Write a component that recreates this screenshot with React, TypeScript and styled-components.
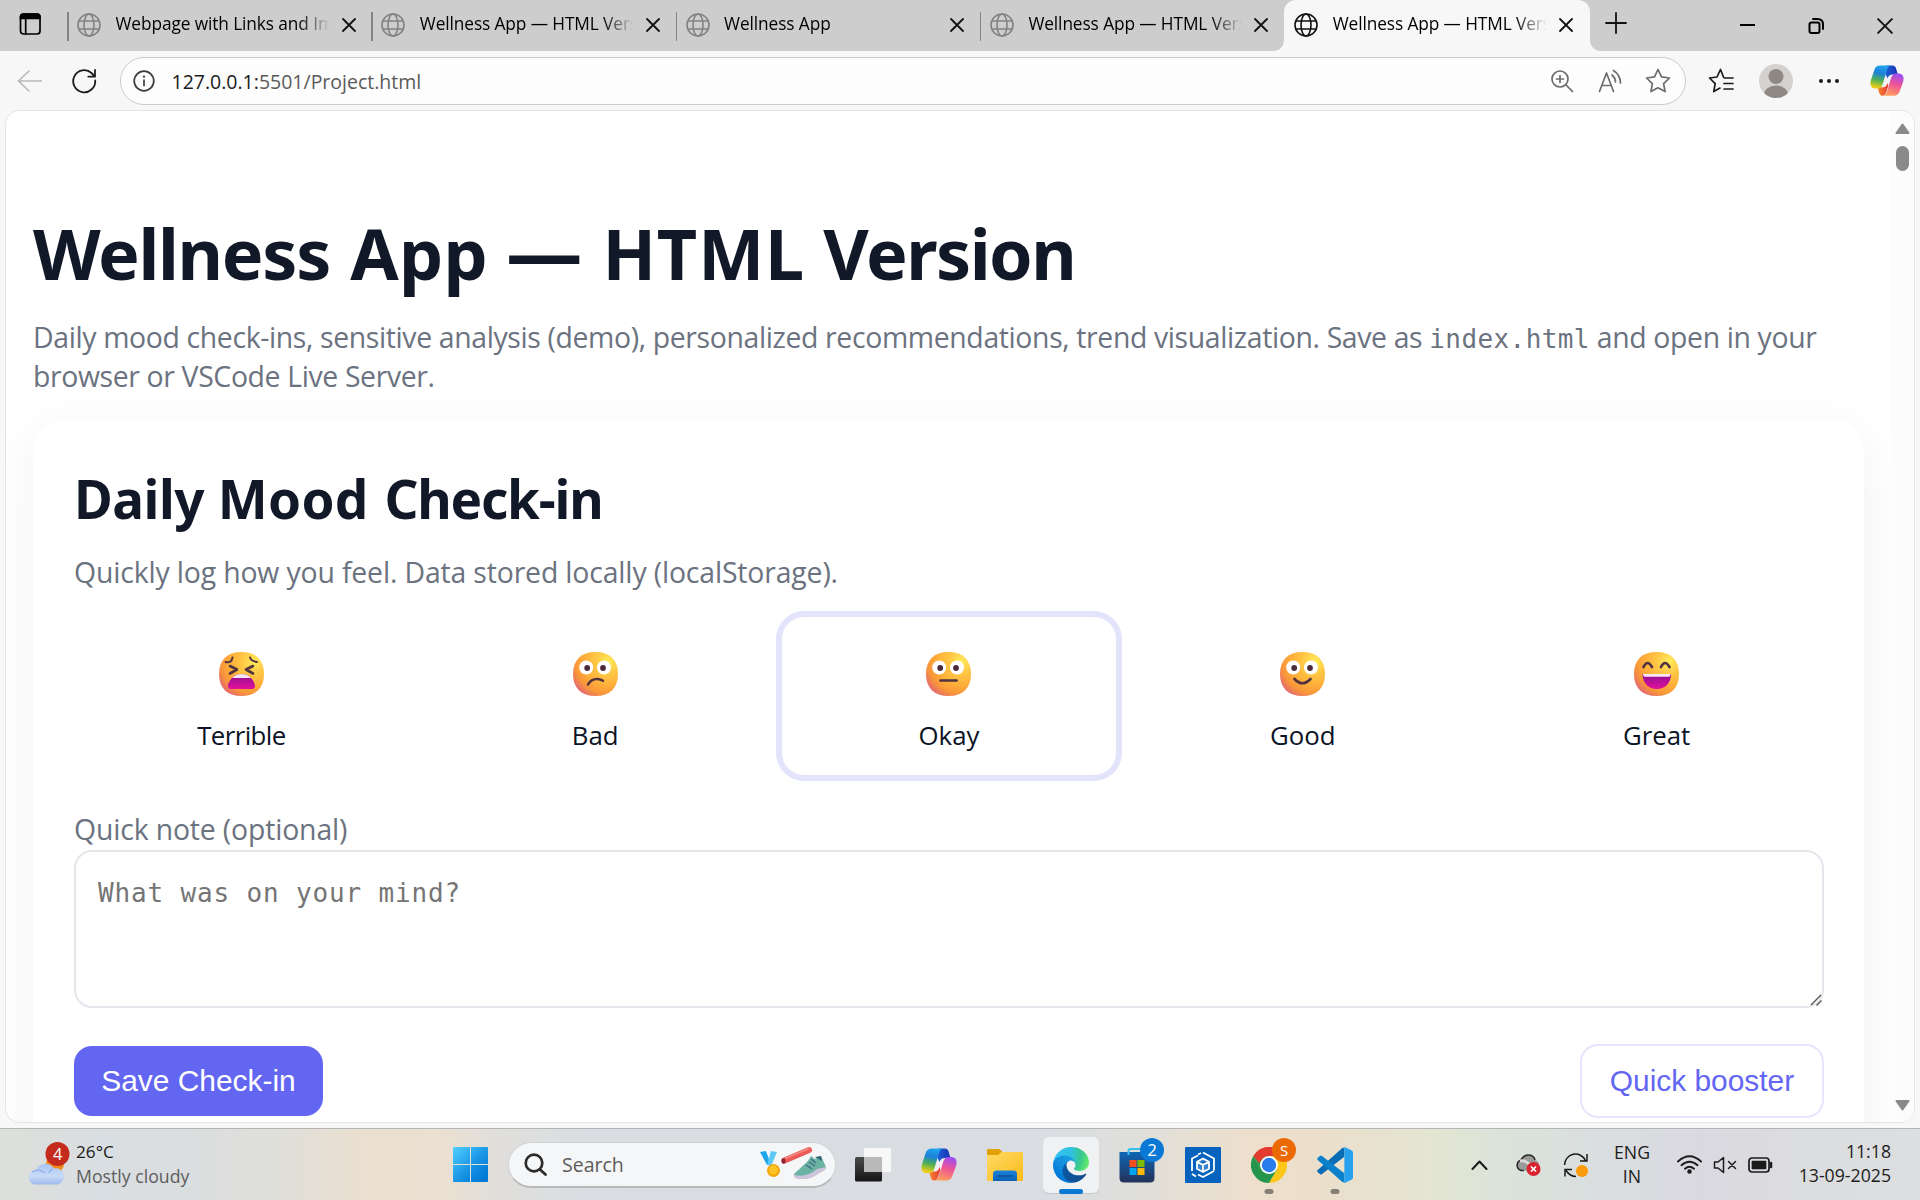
import React from 'react';
import styled, { createGlobalStyle } from 'styled-components';

const UI = '"Open Sans", "Noto Sans", sans-serif';

const GlobalStyle = createGlobalStyle`
  * { box-sizing: border-box; }
  html, body { margin: 0; padding: 0; overflow: hidden; }
  body { font-family: ${UI}; }
  svg { display: block; flex: none; }
`;

const Screen = styled.div`
  width: 1920px;
  height: 1200px;
  display: flex;
  flex-direction: column;
  background: #f7f7f7;
  overflow: hidden;
`;

/* ---------- tab strip ---------- */

const TabStrip = styled.div`
  height: 51px;
  flex: none;
  display: flex;
  background: #cdcdcd;
`;

const WorkspaceButton = styled.div`
  width: 67px;
  padding: 13px 0 0 19px;
`;

const Tab = styled.div<{ $active?: boolean }>`
  position: relative;
  width: ${p => (p.$active ? 306 : 304.3)}px;
  height: 51px;
  display: flex;
  align-items: flex-start;
  padding: 13px 0 0 10px;
  color: #000;
  background: ${p => (p.$active ? '#f7f7f7' : 'transparent')};
  border-radius: 12px 12px 0 0;

  &::before {
    content: '';
    position: absolute;
    left: ${p => (p.$active ? -10 : 0)}px;
    top: ${p => (p.$active ? 41 : 12)}px;
    width: ${p => (p.$active ? 10 : 1.5)}px;
    height: ${p => (p.$active ? 10 : 29)}px;
    background: ${p => (p.$active ? 'radial-gradient(circle at 0 0, transparent 9.5px, #f7f7f7 10px)' : '#858585')};
  }
  &::after {
    content: '';
    position: absolute;
    display: ${p => (p.$active ? 'block' : 'none')};
    right: -10px;
    top: 41px;
    width: 10px;
    height: 10px;
    background: radial-gradient(circle at 100% 0, transparent 9.5px, #f7f7f7 10px);
  }
`;

const TabTitle = styled.div`
  width: 213px;
  margin: -1px 13px 0 14.5px;
  overflow: hidden;
  white-space: nowrap;
  font-size: 17.3px;
  line-height: 24px;
  letter-spacing: -0.1px;
  mask-image: linear-gradient(90deg, #000 182px, transparent 214px);
`;

const TabClose = styled.div`
  padding-top: 5px;
`;

const NewTab = styled.div`
  padding: 12px 0 0 15px;
`;

const WindowControls = styled.div`
  margin-left: auto;
  display: flex;
  gap: 53px;
  padding: 18px 27px 0 0;
`;

/* ---------- toolbar ---------- */

const Toolbar = styled.div`
  height: 59px;
  flex: none;
  display: flex;
  align-items: center;
  padding: 1px 16px 0 17px;
`;

const BackSlot = styled.div`
  width: 55px;
`;

const ReloadSlot = styled.div`
  width: 48px;
`;

const AddressBar = styled.div`
  width: 1566px;
  height: 48px;
  display: flex;
  align-items: center;
  padding: 0 14px 0 12px;
  border: 1.5px solid #cccccc;
  border-radius: 24px;
  background: #fdfdfd;
`;

const Url = styled.div`
  flex: 1;
  padding: 2px 0 0 16.5px;
  font-size: 19.5px;
  line-height: 26px;
  color: #5a5a5a;
  span { color: #1b1b1b; }
`;

const AddressActions = styled.div`
  display: flex;
  align-items: center;
  gap: 23.5px;
`;

const ToolbarActions = styled.div`
  flex: 1;
  display: flex;
  align-items: center;
  gap: 25px;
  padding-left: 22px;
  svg:last-child { margin-left: auto; }
`;

/* ---------- page ---------- */

const Viewport = styled.div`
  height: 1013px;
  flex: none;
  margin: 0 5px 0 5px;
  display: flex;
  border: 1.5px solid #e4e4e4;
  border-radius: 14px;
  background: #fff;
  overflow: hidden;
`;

const Page = styled.main`
  width: 1885px;
  padding: 100px 27px 0 27px;
  color: #111827;
  overflow: hidden;
`;

const Title = styled.h1`
  margin: 0 0 22.5px;
  font: 700 70px/84px "Noto Sans", sans-serif;
  white-space: nowrap;
`;

const Word = styled.span<{ $ls: number; $size?: number; $before?: number }>`
  letter-spacing: ${p => p.$ls}px;
  margin-left: ${p => p.$before ?? 0}px;
  font-size: ${p => (p.$size ? `${p.$size}px` : 'inherit')};
  line-height: 1;
`;

const Muted = styled.p<{ $ls?: number }>`
  margin: 0;
  font-size: 28.4px;
  line-height: 39px;
  letter-spacing: ${p => p.$ls ?? -0.36}px;
  color: #6b7280;
`;

const Code = styled.code`
  font: 26px/30px "DejaVu Sans Mono", monospace;
  letter-spacing: 0.4px;
`;

const Card = styled.section`
  margin-top: 23.5px;
  height: 900px;
  width: 1831px;
  padding: 48px 40px 0 41px;
  border-radius: 32px;
  background: #fff;
  box-shadow: 0 14px 54px rgba(2, 6, 23, 0.06);
`;

const CardTitle = styled.h2`
  margin: 0 0 22px;
  font: 700 53px/64px "Noto Sans", sans-serif;
  white-space: nowrap;
`;

const Moods = styled.div`
  display: grid;
  grid-template-columns: repeat(5, 1fr);
  gap: 19px;
  margin: 25px 0 35px;
`;

const Mood = styled.div<{ $selected?: boolean }>`
  height: 158px;
  display: flex;
  flex-direction: column;
  align-items: center;
  gap: 20.5px;
  padding-top: 35px;
  border-radius: 22px;
  font-size: 25.8px;
  line-height: 36px;
  color: #0b1324;
  box-shadow: ${p => (p.$selected ? '0 0 0 6px #e3e3fc' : 'none')};
`;

const MoodName = styled.span<{ $ls?: number }>`
  letter-spacing: ${p => p.$ls ?? 0}px;
`;

const NoteField = styled.div`
  position: relative;
  margin-top: 1px;
  height: 158px;
`;

const Note = styled.textarea`
  display: block;
  width: 100%;
  height: 100%;
  padding: 23px 22px;
  border: 2px solid #e5e5ec;
  border-radius: 18px;
  background: #fff;
  resize: none;
  outline: none;
  font: 26px/36px "DejaVu Sans Mono", monospace;
  letter-spacing: 0.85px;
  &::placeholder { color: #757575; opacity: 1; }
`;

const Grip = styled.svg`
  position: absolute;
  right: 2px;
  bottom: 2px;
`;

const Actions = styled.div`
  display: flex;
  align-items: center;
  justify-content: space-between;
  margin-top: 36px;
`;

const Button = styled.button<{ $ghost?: boolean }>`
  height: ${p => (p.$ghost ? 74 : 70)}px;
  width: ${p => (p.$ghost ? 244 : 249)}px;
  padding: 0;
  border: ${p => (p.$ghost ? '2px solid #e5e5fc' : 'none')};
  border-radius: 18px;
  background: ${p => (p.$ghost ? '#fff' : '#6366f1')};
  color: ${p => (p.$ghost ? '#6366f1' : '#fff')};
  font: 29.9px/36px "Liberation Sans", Arial, sans-serif;
`;

const ScrollBar = styled.div`
  width: 23px;
  display: flex;
  flex-direction: column;
  align-items: center;
  padding: 12px 0 11px;
  background: #fcfcfc;
`;

const Thumb = styled.div`
  width: 13px;
  height: 25px;
  margin: 12px 0 auto;
  border-radius: 7px;
  background: #8a8a8a;
`;

/* ---------- taskbar ---------- */

const Taskbar = styled.footer`
  height: 72px;
  margin-top: auto;
  flex: none;
  display: flex;
  align-items: center;
  padding: 0 29px;
  border-top: 1.5px solid #b3b5b5;
  background: linear-gradient(90deg, #dddfd9 0, #d9dee2 100px, #dbdedf 190px, #e0dfda 280px, #ebdfcf 370px, #ebe0d1 440px, #e0dedb 500px, #dadee2 580px, #d9dde2 1050px, #e0dfda 1140px, #eddfcc 1250px, #ebdfcb 1320px, #e3e5d3 1440px, #dae3da 1510px, #dadee0 1600px, #dad9e0 1700px, #dcdddf 1800px, #dddee0 1920px);
`;

const Weather = styled.div`
  width: 424px;
  display: flex;
  align-items: center;
  gap: 6px;
  margin-top: -2px;
  font-size: 17.2px;
  line-height: 24px;
  color: #1c1c1c;
`;

const WeatherText = styled.div`
  div + div { color: #5d5d5d; font-size: 17.7px; }
`;

const SearchBox = styled.div`
  width: 328px;
  height: 46px;
  margin: 0 4px 0 20px;
  display: flex;
  align-items: center;
  padding: 0 8px 0 15px;
  border: 1.5px solid #cfd1d3;
  border-bottom: 2px solid #b6b8ba;
  border-radius: 23px;
  background: #f5f6f7;
  font-size: 19.5px;
  color: #5b5b5b;
  span { flex: 1; padding-left: 15px; }
`;

const AppSlot = styled.div`
  position: relative;
  width: 66px;
  height: 56px;
  display: flex;
  align-items: center;
  justify-content: center;
`;

const ActiveApp = styled.div`
  width: 56px;
  height: 56px;
  display: flex;
  align-items: center;
  justify-content: center;
  border-radius: 6px;
  background: #eff1f3;
  box-shadow: 0 1px 1px #c3c6c9;
`;

const RunningMark = styled.i<{ $active?: boolean }>`
  position: absolute;
  left: 50%;
  bottom: -1px;
  width: ${p => (p.$active ? 24 : 9)}px;
  height: 5px;
  transform: translateX(-50%);
  border-radius: 3px;
  background: ${p => (p.$active ? '#0a78d4' : '#858076')};
`;

const Badge = styled.b<{ $color: string; $size?: number }>`
  position: absolute;
  right: 6px;
  top: 1px;
  width: 24px;
  height: 24px;
  border-radius: 50%;
  background: ${p => p.$color};
  color: #fff;
  font: 400 ${p => p.$size ?? 17}px/24px ${UI};
  text-align: center;
`;

const Tray = styled.div`
  margin-left: auto;
  display: flex;
  align-items: center;
`;

const TrayIcon = styled.div<{ $w: number }>`
  width: ${p => p.$w}px;
  display: flex;
`;

const TrayText = styled.div<{ $w: number; $end?: boolean }>`
  width: ${p => p.$w}px;
  padding-right: ${p => (p.$end ? 0 : 20)}px;
  margin-top: ${p => (p.$end ? -2 : 0)}px;
  font-size: 17.7px;
  line-height: 23.5px;
  text-align: ${p => (p.$end ? 'right' : 'center')};
  color: #1c1c1c;
`;

/* ---------- icons ---------- */

type LineProps = { w: number; h?: number; vb?: string; sw?: number; c?: string; children: React.ReactNode };
const Line = ({ w, h = w, vb, sw = 1.7, c = '#1b1b1b', children }: LineProps) => (
  <svg width={w} height={h} viewBox={vb ?? `0 0 ${w} ${h}`} fill="none" stroke={c} strokeWidth={sw} strokeLinecap="round" strokeLinejoin="round">
    {children}
  </svg>
);

const Globe = ({ c }: { c: string }) => (
  <Line w={24} c={c} sw={1.6}>
    <circle cx="12" cy="12" r="11" />
    <ellipse cx="12" cy="12" rx="5" ry="11" />
    <path d="M2 8h20M2 16h20" />
  </Line>
);

const Cross = ({ s, sw = 1.8 }: { s: number; sw?: number }) => (
  <Line w={s} sw={sw} c="#111" vb="0 0 14 14"><path d="M1 1l12 12M13 1L1 13" /></Line>
);

const Copilot = ({ w, id }: { w: number; id: string }) => (
  <svg width={w} height={(w * 33) / 36} viewBox="0 0 36 33">
    <defs>
      <linearGradient id={`${id}a`} x1="0.6" y1="0" x2="0.4" y2="1">
        <stop offset="0" stopColor="#22a7ee" /><stop offset=".35" stopColor="#1b80d8" /><stop offset=".65" stopColor="#4fb055" /><stop offset="1" stopColor="#f6cf10" />
      </linearGradient>
      <linearGradient id={`${id}b`} x1="0.6" y1="0" x2="0.3" y2="1">
        <stop offset="0" stopColor="#a04df0" /><stop offset=".45" stopColor="#ee5497" /><stop offset="1" stopColor="#ffa05a" />
      </linearGradient>
      <linearGradient id={`${id}c`}><stop offset="0" stopColor="#1b5fd6" /><stop offset="1" stopColor="#1a33b4" /></linearGradient>
      <linearGradient id={`${id}d`}><stop offset="0" stopColor="#f8862e" /><stop offset="1" stopColor="#e63c35" /></linearGradient>
    </defs>
    <path d="M14 10.500h8.500L20 24h-7z" fill="#f4f1f6" />
    <path d="M17 .5h6.500c3 0 4 2 4.500 4.500L29.500 10h-5.500c-3 0-4.500 1.500-5.500 4l-2-4z" fill={`url(#${id}c)`} />
    <path d="M8 23.500h6c2.500 0 3.700-2 4.500-4.500l1 3-2.500 7c-1 2.500-2 3.500-4 3.500s-3-2-3.500-4z" fill={`url(#${id}d)`} />
    <path d="M11 .5h11.500c-2.500 0-3.700 2-4.500 4.500l-4.500 15c-1 3-2.500 5-5.500 5H6c-5 0-6.500-4-5-9L4.500 5.500C5.500 2 7.500.5 11 .5z" fill={`url(#${id}a)`} />
    <path d="M25 32.500H13.500c2.500 0 3.700-2 4.500-4.500l4.200-14c1-3 2.500-5 5.500-5H30c5 0 6.500 4 5 9l-3.500 9.500c-1 3.500-3 5-6.500 5z" fill={`url(#${id}b)`} />
  </svg>
);

const Edge = () => (
  <svg width="36" height="36" viewBox="0 0 256 256">
    <defs>
      <linearGradient id="e1" x1="60" y1="180" x2="235" y2="180" gradientUnits="userSpaceOnUse"><stop offset="0" stopColor="#0c59a4" /><stop offset="1" stopColor="#114a8b" /></linearGradient>
      <linearGradient id="e2" x1="150" y1="100" x2="45" y2="220" gradientUnits="userSpaceOnUse"><stop offset="0" stopColor="#1b9de2" /><stop offset=".3" stopColor="#1595df" /><stop offset="1" stopColor="#0078d7" /></linearGradient>
      <radialGradient id="e3" cx="30" cy="50" r="230" gradientUnits="userSpaceOnUse"><stop offset="0" stopColor="#35c1f1" /><stop offset=".45" stopColor="#2fc2df" /><stop offset=".75" stopColor="#36c98c" /><stop offset="1" stopColor="#66eb6e" /></radialGradient>
    </defs>
    <path fill="url(#e1)" d="M231 190.500c-3.400 1.800-6.900 3.400-10.500 4.700a101.900 101.900 0 0 1-35.900 6.400c-47.300 0-88.500-32.500-88.500-74.300.1-11.400 6.400-21.900 16.400-27.300-42.800 1.800-53.800 46.400-53.800 72.500 0 73.900 68.100 81.400 82.800 81.400 7.900 0 19.800-2.300 27-4.600l1.300-.4a128.300 128.300 0 0 0 66.600-52.800 4 4 0 0 0-5.400-5.600z" />
    <path fill="url(#e2)" d="M105.700 241.400a79.200 79.200 0 0 1-22.700-21.300 80.700 80.700 0 0 1 29.500-120c3.200-1.500 8.500-4.100 15.600-4a32.400 32.400 0 0 1 25.700 13 31.900 31.900 0 0 1 6.300 18.700c0-.2 24.500-79.600-80-79.600-43.900 0-80 41.700-80 78.200-.2 19.300 4 38.500 12.100 56a128 128 0 0 0 156.400 67.100 75.500 75.500 0 0 1-62.800-8z" />
    <path fill="url(#e3)" d="M152.300 148.900c-.8 1-3.300 2.500-3.300 5.700 0 2.600 1.700 5.100 4.700 7.200 14.400 10 41.500 8.700 41.600 8.700a59.600 59.600 0 0 0 30.300-8.300 61.400 61.400 0 0 0 30.400-52.900c.3-22.400-8-37.300-11.300-43.900C223.500 23.900 177.700 0 128 0A128 128 0 0 0 0 126.200c.5-36.500 36.800-66 80-66 3.500 0 23.500.3 42 10 16.300 8.600 24.900 18.900 30.800 29.200 6.200 10.700 7.300 24.100 7.300 29.500s-2.700 13.300-7.800 20z" />
  </svg>
);

const Windows = () => (
  <svg width="35" height="35" viewBox="0 0 35 35">
    <defs><linearGradient id="win" x1="0" y1="0" x2="35" y2="35" gradientUnits="userSpaceOnUse"><stop offset="0" stopColor="#4fd0ff" /><stop offset=".5" stopColor="#1c98e6" /><stop offset=".75" stopColor="#0883dc" /><stop offset="1" stopColor="#0273d0" /></linearGradient></defs>
    <path fill="url(#win)" d="M1 0h16v17H0V1q0-1 1-1zM18 0h16q1 0 1 1v16H18zM0 18h17v17H1q-1 0-1-1zM18 18h17v16q0 1-1 1H18z" />
  </svg>
);

const WeatherIcon = () => (
  <svg width="41" height="44" viewBox="0 0 41 44">
    <defs><linearGradient id="cl" x1="0" y1="0" x2="0" y2="1"><stop offset="0" stopColor="#a9c4f1" /><stop offset=".6" stopColor="#c9dbf8" /><stop offset="1" stopColor="#9dbbee" /></linearGradient></defs>
    <circle cx="26" cy="22" r="9" fill="#f08a1d" />
    <path d="M7 42.500a7 7 0 0 1-.5-14A10.500 10.500 0 0 1 25 26.500a8 8 0 1 1 3.500 16z" fill="url(#cl)" />
    <path d="M3 30c5-3 10-1.500 13 1M24 27c-2 .5-3.500 2-4 4" stroke="#7fa3e2" strokeWidth="1.200" fill="none" opacity=".7" />
    <circle cx="28.500" cy="12" r="12" fill="#c42b1c" />
    <text x="28.800" y="18" fill="#fff" fontSize="16.500" fontFamily="Open Sans" textAnchor="middle">4</text>
  </svg>
);

const SearchArt = () => (
  <svg width="68" height="36" viewBox="0 0 68 36">
    <path d="M1 6l6-1 5 14H8z" fill="#1fa6ea" /><path d="M12 5l6 1-6 14-4-1z" fill="#5cc8f5" />
    <circle cx="14.500" cy="24.500" r="6.500" fill="#f2a50c" /><circle cx="14.500" cy="24" r="4.500" fill="#ffc324" />
    <path d="M25.500 14.500L50 4" stroke="#ea5a57" strokeWidth="6" strokeLinecap="round" /><path d="M26 12.500L50 2.500" stroke="#f58a80" strokeWidth="1.800" />
    <ellipse cx="24.500" cy="15" rx="2" ry="2.800" fill="#8e2431" />
    <path d="M35 28l14-13 3-5 4 3 6-3 5 11c0 3-4 4-7 6s-10 6-16 6-10-2-9-5z" fill="#6bb3a3" />
    <path d="M35 29c8 2 16 0 23-6l9-2c0 4-4 4-8 7s-9 5-15 5-10-1-9-4z" fill="#cfc4dc" />
    <path d="M47 19l6 4M50 16l6 4M52 13l5 4" stroke="#3f6f86" strokeWidth="1.500" /><path d="M56 11l6-1 1 5z" fill="#2c6773" />
  </svg>
);

const TaskView = () => (
  <svg width="36" height="36" viewBox="0 0 36 36">
    <defs><linearGradient id="tv" x1="0" y1="0" x2="0" y2="1"><stop offset="0" stopColor="#4a4a4a" /><stop offset="1" stopColor="#161616" /></linearGradient></defs>
    <rect y="10" width="27" height="24.500" rx="1.500" fill="url(#tv)" />
    <rect x="9" y="1" width="27" height="24" rx="1" fill="#fbfbfb" opacity=".85" />
    <path d="M9 10h18v15H9z" fill="#b9b9b9" />
  </svg>
);

const Folder = () => (
  <svg width="36" height="34" viewBox="0 0 36 34">
    <defs>
      <linearGradient id="fo" x1="0" y1="0" x2="1" y2="1"><stop offset="0" stopColor="#ffda66" /><stop offset="1" stopColor="#fcbb1b" /></linearGradient>
      <linearGradient id="fb" x1="0" y1="0" x2="0" y2="1"><stop offset="0" stopColor="#1b83d9" /><stop offset="1" stopColor="#0c62b5" /></linearGradient>
    </defs>
    <path d="M0 2q0-1 1-1h10q1.500 0 2.500 1l2 2-3 4H0z" fill="#e0a106" />
    <path d="M0 7h11l3.500-3H35q1 0 1 1v27q0 1-1 1H1q-1 0-1-1z" fill="url(#fo)" />
    <path d="M6 33v-7q0-3.500 3.500-3.500h17q3.500 0 3.500 3.500v7z" fill="url(#fb)" />
    <path d="M11 28h14" stroke="#0b4f96" strokeWidth="1.600" strokeLinecap="round" />
  </svg>
);

const Store = () => (
  <svg width="36" height="36" viewBox="0 0 36 36">
    <defs><linearGradient id="st" x1="0" y1="0" x2="0" y2="1"><stop offset="0" stopColor="#0f66b5" /><stop offset="1" stopColor="#243259" /></linearGradient></defs>
    <path d="M9.500 8V4q0-2 2-2h13q2 0 2 2v4" stroke="#35c0ee" strokeWidth="2" fill="none" />
    <path d="M.5 5h35v26q0 4.500-4.500 4.500H5Q.5 35.500.5 31z" fill="url(#st)" />
    <path d="M9.500 8V5" stroke="#35c0ee" strokeWidth="2" />
    <path d="M10.500 13h7v7h-7z" fill="#f25022" /><path d="M18.500 13h7v7h-7z" fill="#7fba00" />
    <path d="M10.500 21h7v7h-7z" fill="#00a4ef" /><path d="M18.500 21h7v7h-7z" fill="#ffb900" />
  </svg>
);

const BoxApp = () => (
  <svg width="36" height="36" viewBox="0 0 36 36" fill="none" stroke="#fff" strokeWidth="1.800">
    <rect width="36" height="36" rx="1" fill="#0563bd" stroke="none" />
    <path d="M16 6l-3 1.500M18 5.500l11 6v12M7 24V11.500l6-3M7 27l4 2.500M13 27.500l5 2.500 11-6" />
    <path d="M18 11.500l6 3.200v7L18 25l-6-3.300v-7zM12 14.700l6 3.200 6-3.200M18 18v7" fill="#cfe0f2" fillOpacity=".25" />
  </svg>
);

const Chrome = () => (
  <svg width="36" height="36" viewBox="0 0 36 36">
    <path d="M18 18L2.400 9A18 18 0 0 1 33.600 9z" fill="#e33b2e" />
    <path d="M18 18h0L33.600 9A18 18 0 0 1 18 36l8-13.500z" fill="#fdc71a" />
    <path d="M18 18l7.800 4.500L18 36A18 18 0 0 1 2.400 9l7.800 13.500z" fill="#24954a" />
    <path d="M18 9h15.600L26 22.500z" fill="#fdc71a" /><path d="M2.400 9H18l-7.800 13.500z" fill="#24954a" />
    <path d="M2.400 9Q9 0 18 0t15.600 9H18q-5 0-7.800 4.500L8 16z" fill="#e33b2e" />
    <circle cx="18" cy="18" r="9" fill="#fff" /><circle cx="18" cy="18" r="7.200" fill="#2a7bec" />
  </svg>
);

const VSCode = () => (
  <svg width="36" height="36" viewBox="0 0 100 100">
    <path d="M76 27L14 75q-3 3-6 0l-6-5q-3-3 0-6L71 2l5 2z" fill="#0a6cb4" />
    <path d="M76 73L14 25q-3-3-6 0l-6 5q-3 3 0 6l69 62 5-2z" fill="#0b81cc" />
    <path d="M71 2Q74-1 78 1l19 9q3 2 3 6v68q0 4-3 6l-19 9q-4 2-7-1 5 2 5-3V5q0-5-5-3z" fill="#27a0ee" />
  </svg>
);

/* ---------- mood faces ---------- */

type MoodKind = 'terrible' | 'bad' | 'okay' | 'good' | 'great';

const Eyes = () => (
  <g>
    <circle cx="13.200" cy="15.500" r="7" fill="#fff" /><circle cx="31" cy="15.500" r="7" fill="#fff" />
    <circle cx="14.200" cy="16" r="2.900" fill="#4a2b3c" /><circle cx="30" cy="16" r="2.900" fill="#4a2b3c" />
  </g>
);

const Face = ({ kind }: { kind: MoodKind }) => (
  <svg width="45" height="44" viewBox="0 0 45 44" fill="none" stroke="#50333f" strokeLinecap="round" strokeLinejoin="round">
    <defs>
      <radialGradient id={`f${kind}`} cx=".78" cy=".22" r=".95"><stop offset="0" stopColor="#ffec5c" /><stop offset=".25" stopColor="#ffcb48" /><stop offset=".55" stopColor="#ffb03a" /><stop offset=".78" stopColor="#f8953a" /><stop offset="1" stopColor="#e0607c" /></radialGradient>
      <linearGradient id={`m${kind}`} x1="0" y1="0" x2="0" y2="1"><stop offset="0" stopColor="#8c0e92" /><stop offset="1" stopColor="#e2119b" /></linearGradient>
    </defs>
    <path d="M22.500 0C37 0 45 8 45 22s-8 22-22.500 22S0 36 0 22 8 0 22.500 0z" fill={`url(#f${kind})`} stroke="none" />
    {kind === 'terrible' && (
      <g>
        <path d="M6.500 10q6 1.500 7-4.500M38 10q-6-1-7-4.500" strokeWidth="1.900" />
        <path d="M11 14l7 3.500-7 4M34 14l-7 3.500 7 4" strokeWidth="2.600" />
        <path d="M22.500 22C31 22 36 30 36 34q0 3-3 3H12q-3 0-3-3c0-4 5-12 13.500-12z" fill="url(#mterrible)" stroke="none" />
        <path d="M22.500 22c4 0 7 1.500 9.300 4H13.200c2.300-2.500 5.300-4 9.300-4z" fill="#f7e6fb" stroke="none" />
      </g>
    )}
    {kind === 'bad' && <g><g stroke="none"><Eyes /></g><path d="M15 32.500q3-5.500 9-5.500 3.500 0 6 1.800" strokeWidth="2.500" /></g>}
    {kind === 'okay' && <g><g stroke="none"><Eyes /></g><path d="M14.500 28.500h16" strokeWidth="2.700" /></g>}
    {kind === 'good' && <g><g stroke="none"><Eyes /></g><path d="M14.500 27q8 8.500 16 0" strokeWidth="2.700" /></g>}
    {kind === 'great' && (
      <g>
        <path d="M9.500 15q4-8 8.500 0M27 15q4-8 8.500 0" strokeWidth="2.700" />
        <path d="M8.500 22h28.500c0 9-6 15-14.200 15S8.500 31 8.500 22z" fill="url(#mgreat)" stroke="none" />
        <path d="M9 22h27.500q0 2.700-1.500 2.700H10.500Q9 24.700 9 22z" fill="#f8e6fb" stroke="none" />
      </g>
    )}
  </svg>
);

const moods: { kind: MoodKind; name: string; ls?: number }[] = [
  { kind: 'terrible', name: 'Terrible', ls: -0.6 },
  { kind: 'bad', name: 'Bad' },
  { kind: 'okay', name: 'Okay' },
  { kind: 'good', name: 'Good' },
  { kind: 'great', name: 'Great' },
];

const tabs = [
  'Webpage with Links and Images',
  'Wellness App — HTML Version',
  'Wellness App',
  'Wellness App — HTML Version',
  'Wellness App — HTML Version',
];

export default function App() {
  return (
    <Screen>
      <GlobalStyle />
      <TabStrip>
        <WorkspaceButton>
          <Line w={22} sw={1.7} c="#000"><rect x="1.500" y="1" width="19.500" height="20" rx="3" /><path d="M1.500 5.500h19.500V4q0-3-3-3h-13.500q-3 0-3 3z" fill="#000" /><path d="M6.700 5v16" /></Line>
        </WorkspaceButton>
        {tabs.map((t, i) => (
          <Tab key={i} $active={i === 4}>
            <Globe c={i === 4 ? '#111' : '#838383'} />
            <TabTitle>{t}</TabTitle>
            <TabClose><Cross s={14} /></TabClose>
          </Tab>
        ))}
        <NewTab><Line w={22} sw={1.8} c="#111"><path d="M11 1v20M1 11h20" /></Line></NewTab>
        <WindowControls>
          <Line w={15} sw={2} c="#000"><path d="M0 7h15" /></Line>
          <Line w={16} sw={2} c="#000"><rect x="1.500" y="4.500" width="10" height="10.500" rx="2" /><path d="M5 1h4.500Q15 1 15 6.500V11" /></Line>
          <Cross s={16} sw={1.7} />
        </WindowControls>
      </TabStrip>

      <Toolbar>
        <BackSlot><Line w={25} h={22} c="#b9b9b9"><path d="M12 1L1.500 11 12 21M2 11h22.500" /></Line></BackSlot>
        <ReloadSlot><Line w={25} sw={1.8}><path d="M23.200 11.500A11 11 0 1 1 19.500 4l3.500 3.500M23 1v6.700h-6.700" /></Line></ReloadSlot>
        <AddressBar>
          <Line w={22} sw={1.7} c="#3c3c3c"><circle cx="11" cy="11" r="9.800" /><path d="M11 10v5.500" /><path d="M11 6.500v.2" strokeWidth="2.200" /></Line>
          <Url><span>127.0.0.1:</span>5501/Project.html</Url>
          <AddressActions>
            <Line w={24} c="#6c6c6c"><circle cx="10" cy="10" r="8" /><path d="M16 16l6.500 6.500M10 6.500v7M6.500 10h7" /></Line>
            <Line w={24} c="#6c6c6c"><path d="M1.500 22.500L8.500 4l7 18.500M4 16.500h9M14 6q3.500 3 3.500 7M15.500 1.500Q22.500 6 22.500 14" /></Line>
            <Line w={26} vb="0 0 26 26" c="#6c6c6c"><path d="M13 1.500l3.500 7.400 8 1.100-5.900 5.600 1.500 8L13 19.800 5.900 23.600l1.500-8L1.500 10l8-1.100z" /></Line>
          </AddressActions>
        </AddressBar>
        <ToolbarActions>
          <Line w={26}><path d="M15.500 9L12.500 1.500 9 9l-7.500 1 5.700 5.600-1.500 8 6.300-3.500M16.500 10H25M16 15.500h9M16 21h9" /></Line>
          <svg width="34" height="34" viewBox="0 0 34 34">
            <clipPath id="av"><circle cx="17" cy="17" r="17" /></clipPath>
            <g clipPath="url(#av)"><path d="M0 0h34v34H0z" fill="#d4d2ce" /><circle cx="17" cy="12.500" r="7.500" fill="#8d8884" /><ellipse cx="17" cy="31" rx="12" ry="9.500" fill="#8d8884" /></g>
          </svg>
          <svg width="22" height="6" viewBox="0 0 22 6" fill="#1b1b1b"><circle cx="3" cy="3" r="2" /><circle cx="11" cy="3" r="2" /><circle cx="19" cy="3" r="2" /></svg>
          <Copilot w={34} id="ct" />
        </ToolbarActions>
      </Toolbar>

      <Viewport>
        <Page>
          <Title>
            <Word $ls={-1.3}>Wellness</Word> <Word $ls={0.3} $before={2}>App</Word>{' '}
            <Word $ls={0} $size={76}>—</Word> <Word $ls={0.9} $before={2}>HTML</Word>{' '}
            <Word $ls={-1.5}>Version</Word>
          </Title>
          <Muted>
            Daily mood check-ins, sensitive analysis (demo), personalized recommendations, trend visualization. Save as{' '}
            <Code>index.html</Code> and open in your browser or VSCode Live Server.
          </Muted>
          <Card>
            <CardTitle>
              <Word $ls={-0.5}>Daily</Word> <Word $ls={0.3}>Mood</Word> <Word $ls={-1.2} $before={2}>Check-in</Word>
            </CardTitle>
            <Muted $ls={-0.15}>Quickly log how you feel. Data stored locally (localStorage).</Muted>
            <Moods>
              {moods.map(m => (
                <Mood key={m.kind} $selected={m.kind === 'okay'}>
                  <Face kind={m.kind} />
                  <MoodName $ls={m.ls}>{m.name}</MoodName>
                </Mood>
              ))}
            </Moods>
            <Muted $ls={-0.15}>Quick note (optional)</Muted>
            <NoteField>
              <Note placeholder="What was on your mind?" />
              <Grip width="12" height="12" viewBox="0 0 12 12" stroke="#555" strokeWidth="1.400"><path d="M1 11L11 1M6.500 11.500l5-5" /></Grip>
            </NoteField>
            <Actions>
              <Button>Save Check-in</Button>
              <Button $ghost>Quick booster</Button>
            </Actions>
          </Card>
        </Page>
        <ScrollBar>
          <svg width="15" height="11" viewBox="0 0 15 11"><path d="M7.500 1.500L13.500 10h-12z" fill="#8a8a8a" stroke="#8a8a8a" strokeWidth="2" strokeLinejoin="round" /></svg>
          <Thumb />
          <svg width="15" height="11" viewBox="0 0 15 11"><path d="M7.500 9.500L1.500 1h12z" fill="#8a8a8a" stroke="#8a8a8a" strokeWidth="2" strokeLinejoin="round" /></svg>
        </ScrollBar>
      </Viewport>

      <Taskbar>
        <Weather>
          <WeatherIcon />
          <WeatherText><div>26°C</div><div>Mostly cloudy</div></WeatherText>
        </Weather>
        <Windows />
        <SearchBox>
          <Line w={23} sw={2.7} c="#2b2b2b"><circle cx="10" cy="10" r="8.300" /><path d="M16 16.500l5.500 5" /></Line>
          <span>Search</span>
          <SearchArt />
        </SearchBox>
        <AppSlot><TaskView /></AppSlot>
        <AppSlot><Copilot w={36} id="cb" /></AppSlot>
        <AppSlot><Folder /></AppSlot>
        <AppSlot><ActiveApp><Edge /></ActiveApp><RunningMark $active /></AppSlot>
        <AppSlot><Store /><Badge $color="#0a78d4">2</Badge></AppSlot>
        <AppSlot><BoxApp /></AppSlot>
        <AppSlot><Chrome /><Badge $color="#ec6a06" $size={15}>S</Badge><RunningMark /></AppSlot>
        <AppSlot><VSCode /><RunningMark /></AppSlot>
        <Tray>
          <TrayIcon $w={44}><Line w={17} h={10} sw={2}><path d="M1.500 9L8.500 1.500 15.500 9" /></Line></TrayIcon>
          <TrayIcon $w={48}>
            <svg width="26" height="24" viewBox="0 0 26 24">
              <path d="M6 17.500a5.500 5.500 0 0 1 0-10.500q3-5.500 8-5 5 .5 6 5 3 .5 4 3.500V18z" fill="#9a9a9a" />
              <path d="M9 17.500H6a5.500 5.500 0 0 1 0-10.500q3-5.500 8-5 5 .5 6 5" fill="none" stroke="#2b2b2b" strokeWidth="1.600" />
              <path d="M5 8q4-1 7 1.500l6 4" stroke="#d9d9d9" strokeWidth="3" fill="none" />
              <circle cx="18.500" cy="16" r="7" fill="#d9232e" /><path d="M16 13.500l5 5M21 13.500l-5 5" stroke="#fff" strokeWidth="1.700" />
            </svg>
          </TrayIcon>
          <TrayIcon $w={44}>
            <svg width="26" height="26" viewBox="0 0 26 26" fill="none" stroke="#1b1b1b" strokeWidth="1.500">
              <path d="M1.500 13A11 11 0 0 1 22.500 8.500M24 2v7h-7M2 24.500v-7h7M3 18.500q4 6 10 6" /><circle cx="19" cy="19" r="6" fill="#fb9a0a" stroke="none" />
            </svg>
          </TrayIcon>
          <TrayText $w={70}>ENG<br />IN</TrayText>
          <TrayIcon $w={36}>
            <Line w={25} h={19} sw={1.9}><path d="M1 6.500q11.500-10.500 23 0M4.500 10.200q8-7 16 0M8 13.700q4.500-3.700 9 0" /><circle cx="12.500" cy="16.500" r="1.300" fill="#1b1b1b" /></Line>
          </TrayIcon>
          <TrayIcon $w={35}>
            <Line w={25} h={18} sw={1.5}><path d="M1.500 6v6H5l5.500 4.500v-15L5 6zM15.500 5.500l7 7M22.500 5.500l-7 7" /></Line>
          </TrayIcon>
          <TrayIcon $w={34}>
            <Line w={25} h={16} sw={1.7}><rect x="1" y="1" width="20" height="14" rx="3" /><path d="M4.500 4.500h13v7h-13z" fill="#1b1b1b" /><path d="M23 6v4" strokeWidth="2.500" /></Line>
          </TrayIcon>
          <TrayText $w={109} $end>11:18<br />13-09-2025</TrayText>
        </Tray>
      </Taskbar>
    </Screen>
  );
}
